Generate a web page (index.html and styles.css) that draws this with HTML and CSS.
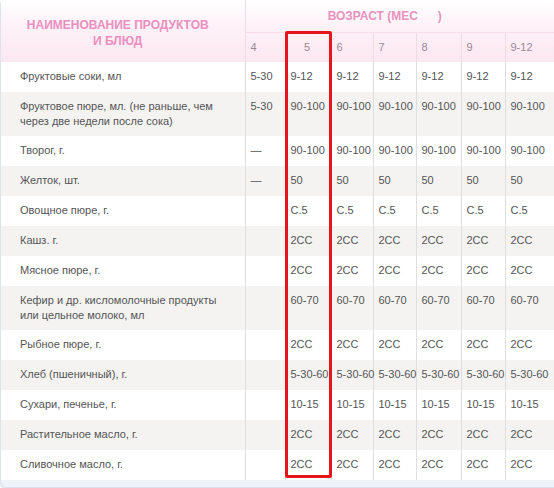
FILE: index.html
```html
<!DOCTYPE html>
<html lang="ru">
<head>
<meta charset="utf-8">
<link rel="stylesheet" href="styles.css">
</head>
<body>
<div class="frame">
  <table class="norms">
    <colgroup>
      <col class="c-name"><col class="c4"><col class="c5"><col class="c6"><col class="c7"><col class="c8"><col class="c9"><col class="c912">
    </colgroup>
    <thead>
      <tr class="h-top">
        <th class="h-name" rowspan="2">НАИМЕНОВАНИЕ ПРОДУКТОВ<br>И БЛЮД</th>
        <th class="h-age" colspan="7">ВОЗРАСТ (МЕС&nbsp;&nbsp;&nbsp;&nbsp;&nbsp;&nbsp;)</th>
      </tr>
      <tr class="h-months">
        <th>4</th><th class="m5">5</th><th>6</th><th>7</th><th>8</th><th>9</th><th>9-12</th>
      </tr>
    </thead>
    <tbody>
      <tr><td>Фруктовые соки, мл</td><td>5-30</td><td>9-12</td><td>9-12</td><td>9-12</td><td>9-12</td><td>9-12</td><td>9-12</td></tr>
      <tr class="alt two"><td>Фруктовое пюре, мл. (не раньше, чем<br>через две недели после сока)</td><td>5-30</td><td>90-100</td><td>90-100</td><td>90-100</td><td>90-100</td><td>90-100</td><td>90-100</td></tr>
      <tr><td>Творог, г.</td><td>—</td><td>90-100</td><td>90-100</td><td>90-100</td><td>90-100</td><td>90-100</td><td>90-100</td></tr>
      <tr class="alt"><td>Желток, шт.</td><td>—</td><td>50</td><td>50</td><td>50</td><td>50</td><td>50</td><td>50</td></tr>
      <tr><td>Овощное пюре, г.</td><td></td><td>C.5</td><td>C.5</td><td>C.5</td><td>C.5</td><td>C.5</td><td>C.5</td></tr>
      <tr class="alt"><td>Кашз. г.</td><td></td><td>2CC</td><td>2CC</td><td>2CC</td><td>2CC</td><td>2CC</td><td>2CC</td></tr>
      <tr><td>Мясное пюре, г.</td><td></td><td>2CC</td><td>2CC</td><td>2CC</td><td>2CC</td><td>2CC</td><td>2CC</td></tr>
      <tr class="alt two"><td>Кефир и др. кисломолочные продукты<br>или цельное молоко, мл</td><td></td><td>60-70</td><td>60-70</td><td>60-70</td><td>60-70</td><td>60-70</td><td>60-70</td></tr>
      <tr><td>Рыбное пюре, г.</td><td></td><td>2CC</td><td>2CC</td><td>2CC</td><td>2CC</td><td>2CC</td><td>2CC</td></tr>
      <tr class="alt"><td>Хлеб (пшеничный), г.</td><td></td><td>5-30-60</td><td>5-30-60</td><td>5-30-60</td><td>5-30-60</td><td>5-30-60</td><td>5-30-60</td></tr>
      <tr><td>Сухари, печенье, г.</td><td></td><td>10-15</td><td>10-15</td><td>10-15</td><td>10-15</td><td>10-15</td><td>10-15</td></tr>
      <tr class="alt"><td>Растительное масло, г.</td><td></td><td>2CC</td><td>2CC</td><td>2CC</td><td>2CC</td><td>2CC</td><td>2CC</td></tr>
      <tr><td>Сливочное масло, г.</td><td></td><td>2CC</td><td>2CC</td><td>2CC</td><td>2CC</td><td>2CC</td><td>2CC</td></tr>
    </tbody>
  </table>
  <div class="highlight"></div>
</div>
</body>
</html>
```

FILE: styles.css
```css
html, body {
  margin: 0;
  padding: 0;
  background: #ffffff;
  overflow: hidden;
}

body {
  width: 554px;
  height: 488px;
  font-family: "Liberation Sans", Arial, sans-serif;
}

.frame {
  position: relative;
  width: 560px;
  margin-top: -1px;
  border: 1px solid #dbe4ec;
  border-radius: 6px;
  background: #eef3f8;
  padding-bottom: 7px;
  box-shadow: 0 1px 2px rgba(150, 170, 190, 0.35);
}

.norms {
  border-collapse: collapse;
  table-layout: fixed;
  width: 559px;
  background: #ffffff;
  font-size: 11px;
  color: #555555;
}

.c-name { width: 244px; }
.c4 { width: 40px; }
.c5 { width: 46px; }
.c6 { width: 42px; }
.c7 { width: 43px; }
.c8 { width: 45px; }
.c9 { width: 44px; }
.c912 { width: 55px; }

thead {
  background: linear-gradient(to bottom, #ffffff 0%, #fdf1f7 45%, #fce7f1 100%);
}

th {
  font-weight: normal;
  padding: 0;
}

.h-top { height: 32px; }
.h-months { height: 30px; }

.h-name {
  color: #ea8fbf;
  font-size: 12px;
  font-weight: bold;
  line-height: 16px;
  text-align: center;
  padding: 4px 10px 0 0;
  border-right: 1px solid #ebdde4;
}

.h-age {
  color: #e892c0;
  font-size: 12px;
  font-weight: bold;
  text-align: center;
  padding: 1px 36px 0 0;
  border-bottom: 1px solid #f6dde9;
}

.h-months th {
  color: #9a8893;
  font-size: 11px;
  text-align: left;
  padding: 0 0 0 5px;
  border-left: 1px solid #ecdde5;
}

.h-months th.m5 {
  text-align: center;
  padding-left: 0;
  padding-right: 2px;
}

td {
  vertical-align: top;
  line-height: 15px;
  padding: 7px 0 8px 5px;
  border-left: 1px solid #dedede;
  white-space: nowrap;
}

tr.two td {
  padding-bottom: 7px;
}

td:first-child {
  border-left: none;
  padding-left: 19px;
}

tr.alt td {
  background: #f4f3f2;
}

.highlight {
  position: absolute;
  left: 284px;
  top: 31px;
  width: 41px;
  height: 441px;
  border: 3px solid #e5161b;
  border-radius: 2px;
}
```
